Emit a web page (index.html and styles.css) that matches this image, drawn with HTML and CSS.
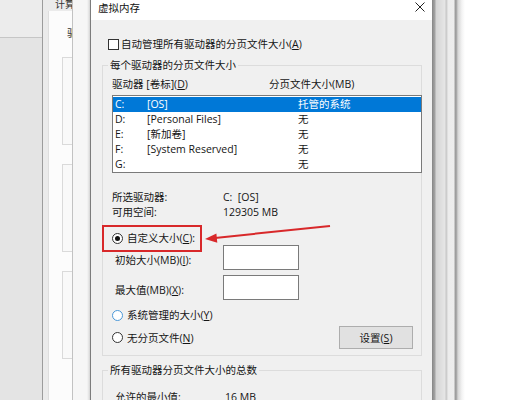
FILE: index.html
```html
<!DOCTYPE html>
<html lang="zh-CN">
<head>
<meta charset="utf-8">
<title>虚拟内存</title>
<link rel="stylesheet" href="styles.css">
</head>
<body>
<div class="screen">
  <div class="desk-left">
    <div class="desk-top"></div>
    <div class="desk-bottom"></div>
  </div>
  <div class="bgwin">
    <div class="bgwin-title">计算机</div>
    <div class="bgwin-body">
      <div class="bgwin-label">驱动器</div>
      <div class="bgbox"></div>
      <div class="bgbox"></div>
      <div class="bgbox"></div>
    </div>
  </div>
  <div class="midwin"></div>
  <div class="dialog">
    <div class="titlebar">
      <span class="title">虚拟内存</span>
      <svg class="close" width="10" height="10" viewBox="0 0 10 10"><path d="M0.5 0.5L9.5 9.5M9.5 0.5L0.5 9.5" stroke="#222" stroke-width="1" fill="none"/></svg>
    </div>
    <div class="body">
      <div class="check-row">
        <span class="checkbox"></span>
        <span>自动管理所有驱动器的分页文件大小(<u>A</u>)</span>
      </div>
      <fieldset class="group group-drives">
        <legend>每个驱动器的分页文件大小</legend>
        <div class="col-head">
          <span class="col-drive">驱动器 [卷标](<u>D</u>)</span>
          <span>分页文件大小(MB)</span>
        </div>
        <div class="listbox">
          <div class="lrow selected"><span class="c1">C:</span><span class="c2">[OS]</span><span>托管的系统</span></div>
          <div class="lrow"><span class="c1">D:</span><span class="c2">[Personal Files]</span><span>无</span></div>
          <div class="lrow"><span class="c1">E:</span><span class="c2">[新加卷]</span><span>无</span></div>
          <div class="lrow"><span class="c1">F:</span><span class="c2">[System Reserved]</span><span>无</span></div>
          <div class="lrow"><span class="c1">G:</span><span class="c2"></span><span>无</span></div>
        </div>
        <div class="info">
          <div class="irow"><span class="ilabel">所选驱动器:</span><span>C:&nbsp; [OS]</span></div>
          <div class="irow"><span class="ilabel">可用空间:</span><span>129305 MB</span></div>
        </div>
        <div class="radio-row custom">
          <span class="radio checked"></span>
          <span>自定义大小(<u>C</u>):</span>
          <svg class="arrow" width="132" height="22" viewBox="0 0 132 22"><path d="M128 3L13 14.9" stroke="#d8282a" stroke-width="2" fill="none"/><path d="M3 16L15.3 19.8L14.4 10.4Z" fill="#d8282a"/></svg>
        </div>
        <div class="field-row">
          <span class="flabel">初始大小(MB)(<u>I</u>):</span>
          <span class="input"></span>
        </div>
        <div class="field-row second">
          <span class="flabel">最大值(MB)(<u>X</u>):</span>
          <span class="input"></span>
        </div>
        <div class="radio-row sys">
          <span class="radio hover"></span>
          <span>系统管理的大小(<u>Y</u>)</span>
        </div>
        <div class="none-row">
          <div class="radio-inline">
            <span class="radio"></span>
            <span>无分页文件(<u>N</u>)</span>
          </div>
          <span class="button">设置(<u>S</u>)</span>
        </div>
      </fieldset>
      <fieldset class="group group-total">
        <legend>所有驱动器分页文件大小的总数</legend>
        <div class="irow total"><span class="tlabel">允许的最小值:</span><span>16 MB</span></div>
      </fieldset>
    </div>
  </div>
  <div class="shadow"></div>
  <div class="desk-right"></div>
</div>
</body>
</html>
```

FILE: styles.css
```css
* { box-sizing: border-box; margin: 0; padding: 0; }
html, body { width: 520px; height: 400px; overflow: hidden; }
body {
  font-family: "Open Sans", "Noto Sans CJK SC", sans-serif;
  font-size: 10.5px;
  color: #151515;
  background: #fff;
}
u { text-decoration: underline; text-underline-offset: 1px; }

.screen { display: flex; width: 520px; height: 400px; overflow: hidden; }

/* desktop left */
.desk-left { width: 42px; flex: none; display: flex; flex-direction: column; }
.desk-top { height: 38px; background: #ececec; border-bottom: 1px solid #c6c6c6; }
.desk-bottom { flex: 1; background: #e4e4e4; }

/* background window */
.bgwin {
  width: 30px; flex: none; overflow: hidden;
  border-left: 1px solid #9c9c9c;
  background: #ebebeb;
  display: flex; flex-direction: column;
}
.bgwin-title {
  height: 12px; line-height: 10px; padding-left: 12px;
  white-space: nowrap; font-size: 10px; color: #333;
  margin-top: -1px;
}
.bgwin-body {
  flex: 1; margin-left: 5px; background: #fcfcfc;
  border-left: 1px solid #dedede;
  display: flex; flex-direction: column;
}
.bgwin-label { padding: 16px 0 0 18px; line-height: 12px; white-space: nowrap; color: #333; }
.bgbox {
  margin: 18px 0 0 13px; width: 30px; height: 88px; flex: none;
  border: 1px solid #dadada; background: #f9f9f9;
}
.bgbox + .bgbox { margin-top: 19px; }

.midwin {
  width: 18px; flex: none;
  background: linear-gradient(to right, #f6f6f6 0 14px, #e2e2e2 16px, #c4c4c4 18px);
  border-left: 1px solid #c2c2c2;
}

/* dialog */
.dialog {
  width: 343px; flex: none; height: 400px;
  border-left: 1px solid #7c7c7c;
  border-right: 1px solid #8a8a8a;
  background: #f0f0f0;
  display: flex; flex-direction: column;
}
.titlebar {
  height: 20px; flex: none; background: #fff;
  display: flex; align-items: flex-start; justify-content: space-between;
  padding-left: 7px;
}
.title { line-height: 16px; font-size: 10.5px; color: #111; }
.close { margin: 2px 7px 0 0; }

.body { flex: 1; padding-top: 17px; position: relative; }

.check-row {
  display: flex; align-items: center; height: 14px; line-height: 14px;
  padding-left: 17px; white-space: nowrap;
}
.checkbox {
  width: 11px; height: 11px; border: 1px solid #333; background: #fff;
  margin-right: 2px; flex: none;
}

.group {
  margin: 7px 0 0 11px; width: 320px;
  border: 1px solid #dcdcdc;
  padding: 5px 0 6px 9px;
  min-width: 0;
}
.group legend {
  line-height: 14px; padding: 0 2px; margin-left: -4px;
  white-space: nowrap;
}

.col-head { display: flex; line-height: 14px; white-space: nowrap; }
.col-drive { width: 157px; flex: none; }

.listbox {
  margin-top: 4px; width: 310px; height: 78px;
  border: 1px solid #7a7a7a; background: #fff;
  padding-top: 1px;
}
.lrow { display: flex; height: 15px; line-height: 15px; padding-left: 2px; white-space: nowrap; }
.lrow.selected { background: #0078d7; color: #fff; }
.c1 { width: 32px; flex: none; }
.c2 { width: 151px; flex: none; }

.info { margin-top: 17px; }
.irow { display: flex; line-height: 15px; height: 15px; white-space: nowrap; }
.ilabel { width: 111px; flex: none; }

.radio-row {
  display: flex; align-items: center; height: 14px; line-height: 14px;
  white-space: nowrap; position: relative;
}
.radio-row.custom { margin-top: 11px; }
.radio-row.custom::before {
  content: ""; position: absolute;
  left: -10px; top: -6px; width: 96px; height: 23px;
  border: 2px solid #d8282a;
}
.radio {
  width: 11px; height: 11px; border-radius: 50%;
  border: 1px solid #333; background: #fff; margin-right: 4px; flex: none;
  display: flex; align-items: center; justify-content: center;
}
.radio.checked::after {
  content: ""; width: 5px; height: 5px; border-radius: 50%; background: #111;
}
.radio.hover { border-color: #4a98d8; }
.arrow { position: absolute; left: 90px; top: -8px; }

.field-row { display: flex; align-items: center; height: 25px; white-space: nowrap; }
.field-row.second { margin-top: 5px; }
.flabel { width: 111px; flex: none; padding: 4px 0 0 3px; line-height: 14px; }
.input { width: 76px; height: 25px; border: 1px solid #7a7a7a; background: #fff; }

.radio-row.sys { margin-top: 8px; }

.none-row {
  margin-top: 4px; height: 23px;
  display: flex; align-items: center; justify-content: space-between;
}
.radio-inline { display: flex; align-items: center; line-height: 14px; white-space: nowrap; }
.button {
  width: 74px; height: 23px; margin-right: 8px;
  border: 1px solid #adadad; background: #e1e1e1;
  display: flex; align-items: center; justify-content: center;
  white-space: nowrap;
}

.group-total { height: 60px; padding-top: 13px; }
.tlabel { width: 113px; flex: none; padding-left: 3px; }

/* right side */
.shadow {
  width: 32px; flex: none;
  background: linear-gradient(to right,
    #929292 0, #a4a4a4 2px, #d4d4d4 3px, #e6e6e6 12px, #c6c6c6 13px, #d2d2d2 14px,
    #ececec 15px, #ededed 21px, #a2a2a2 22px, #9a9a9a 23px, #d6d6d6 25px, #f4f4f4 29px, #ffffff 32px);
}
.desk-right { flex: 1; background: #fff; }
```
